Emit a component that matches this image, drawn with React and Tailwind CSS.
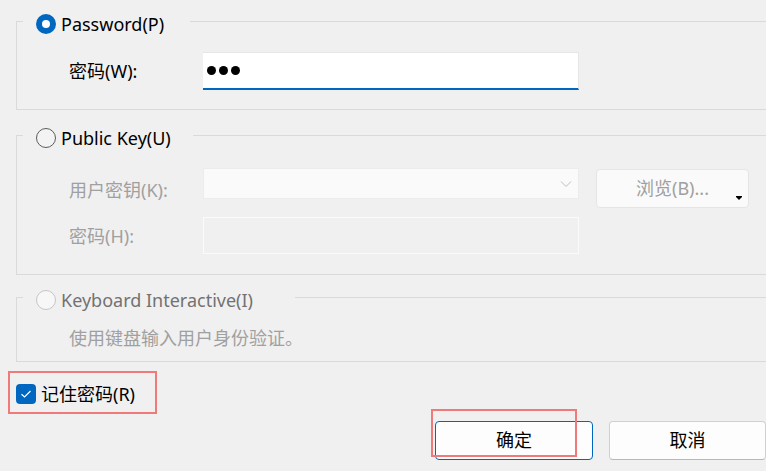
import React from "react";

const FONT = { fontFamily: '"Noto Sans", "Noto Sans CJK SC", sans-serif' };

function Radio({ state }) {
  if (state === "on")
    return (
      <span className="flex h-[20px] w-[20px] items-center justify-center rounded-full bg-[#0067c0]">
        <span className="h-[8px] w-[8px] rounded-full bg-white" />
      </span>
    );
  if (state === "disabled")
    return <span className="block h-[20px] w-[20px] rounded-full border border-[#c6c6c6] bg-[#f7f7f7]" />;
  return <span className="block h-[20px] w-[20px] rounded-full border border-[#5c5c5c] bg-[#f3f3f3]" />;
}

function Group({ legendW, radio, title, titleCls, children, className, bodyCls }) {
  return (
    <fieldset className={"ml-4 w-[780px] border border-[#dadada] " + className}>
      <legend className={"ml-[6px] h-[14px] " + legendW}>
        <div className="flex h-[20px] items-center pl-[13px]">
          <Radio state={radio} />
          <span className={"ml-[5px] text-[18px] leading-[20px] " + titleCls}>{title}</span>
        </div>
      </legend>
      <div className={bodyCls}>{children}</div>
    </fieldset>
  );
}

export default function App() {
  return (
    <div className="h-[471px] w-[766px] overflow-hidden bg-[#f0f0f0] text-black" style={FONT}>
      <Group
        className="mt-[14px]"
        legendW="w-[167px]"
        radio="on"
        title="Password(P)"
        titleCls="text-black"
        bodyCls="pt-[24px] pb-[19px]"
      >
        <div className="flex items-center">
          <span className="w-[186px] pl-[52px] text-[18px] leading-[20px]">密码(W):</span>
          <div className="flex h-[38px] w-[376px] items-center gap-[3px] border-t border-r border-[#e6e6e6] border-b-2 border-b-[#0067c0] bg-white pl-[4px]">
            <span className="h-[9px] w-[9px] rounded-full bg-black" />
            <span className="h-[9px] w-[9px] rounded-full bg-black" />
            <span className="h-[9px] w-[9px] rounded-full bg-black" />
          </div>
        </div>
      </Group>

      <Group
        className="mt-[18px]"
        legendW="w-[170px]"
        radio="off"
        title="Public Key(U)"
        titleCls="text-black"
        bodyCls="pt-[26px] pb-[20px]"
      >
        <div className="flex items-start">
          <span className="mt-[12px] w-[186px] pl-[52px] text-[18px] leading-[20px] text-[#a0a0a0]">用户密钥(K):</span>
          <div className="flex h-[31px] w-[376px] items-center justify-end border border-[#ececec] bg-[#fafafa] pr-[6px]">
            <svg width="12" height="8" viewBox="0 0 12 8" fill="none">
              <path d="M1 1.5 L6 6.5 L11 1.5" stroke="#bdbdbd" strokeWidth="1" />
            </svg>
          </div>
          <div className="relative ml-[17px] mt-[1px] flex h-[39px] w-[153px] items-center justify-center rounded-[4px] border border-[#e5e5e5] bg-[#fafafa] text-[18px] text-[#a0a0a0]">
            浏览(B)...
            <svg className="absolute right-[6px] bottom-[7px]" width="6" height="4" viewBox="0 0 6 4">
              <path d="M0 0 H6 V1 L3 4 L0 1 Z" fill="#000" />
            </svg>
          </div>
        </div>
        <div className="mt-[9px] flex items-center">
          <span className="w-[186px] pl-[52px] text-[18px] leading-[20px] text-[#a0a0a0]">密码(H):</span>
          <div className="h-[37px] w-[376px] border border-[#fbfbfb] bg-[#f0f0f0]" />
        </div>
      </Group>

      <Group
        className="mt-[15px]"
        legendW="w-[272px]"
        radio="disabled"
        title="Keyboard Interactive(I)"
        titleCls="text-[#727272]"
        bodyCls="pt-[24px] pb-[13px]"
      >
        <div className="pl-[52px] text-[18px] leading-[20px] text-[#a0a0a0]">使用键盘输入用户身份验证。</div>
      </Group>

      <div className="relative mt-[22px] flex items-center pl-4">
        <span className="flex h-[20px] w-[20px] items-center justify-center rounded-[4px] bg-[#0067c0]">
          <svg width="12" height="10" viewBox="0 0 12 10" fill="none">
            <path d="M1.5 5.2 L4.5 8 L10.5 2" stroke="#fff" strokeWidth="1.2" />
          </svg>
        </span>
        <span className="ml-[5px] text-[18px] leading-[20px]">记住密码(R)</span>
        <div className="pointer-events-none absolute left-[8px] top-[-13px] h-[43px] w-[149px] border-2 border-[#f07a7a]" />
      </div>

      <div className="relative mt-[17px] flex justify-end gap-[16px]">
        <button className="flex h-[39px] w-[158px] items-center justify-center rounded-[4px] border border-[#0067c0] bg-[#fdfdfd] text-[18px] text-black">
          确定
        </button>
        <button className="flex h-[39px] w-[157px] items-center justify-center rounded-[4px] border border-[#d0d0d0] border-b-[#b8b8b8] bg-[#fdfdfd] text-[18px] text-black">
          取消
        </button>
        <div className="pointer-events-none absolute left-[431px] top-[-12px] h-[48px] w-[146px] border-2 border-[#f07a7a]" />
      </div>
    </div>
  );
}
